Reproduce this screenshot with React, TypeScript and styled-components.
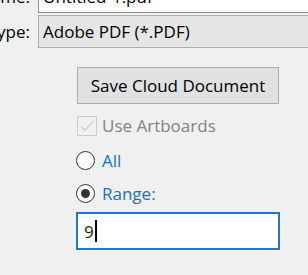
import React from 'react'
import styled, { createGlobalStyle } from 'styled-components'

const GlobalStyle = createGlobalStyle`
  html, body {
    margin: 0;
    padding: 0;
    background: #f0f0f0;
    overflow: hidden;
  }
  body {
    font-family: "Open Sans", "Noto Sans", sans-serif;
    font-size: 17px;
    line-height: 23px;
    color: #000;
  }
`

const Page = styled.div`
  width: 308px;
  height: 275px;
  overflow: hidden;
  background: #f0f0f0;
`

const FieldGrid = styled.div`
  display: grid;
  grid-template-columns: 30px 1fr;
  column-gap: 8px;
  row-gap: 2px;
  margin-top: -20px;
`

const Label = styled.div`
  display: flex;
  justify-content: flex-end;
  align-items: center;
  overflow: hidden;
  white-space: nowrap;
`

const Field = styled.div<{ $readOnly?: boolean }>`
  height: 33px;
  box-sizing: border-box;
  display: flex;
  align-items: center;
  padding-left: 4px;
  margin-right: -10px;
  white-space: nowrap;
  background: ${({ $readOnly }) => ($readOnly ? '#e5e5e5' : '#ffffff')};
  border: 1px solid ${({ $readOnly }) => ($readOnly ? '#adadad' : '#8f8f8f')};
`

const Options = styled.div`
  display: flex;
  flex-direction: column;
  align-items: flex-start;
  margin-left: 76px;
`

const Button = styled.button`
  margin-top: 19px;
  margin-left: 1px;
  width: 202px;
  height: 37px;
  box-sizing: border-box;
  background: #e1e1e1;
  border: 1px solid #adadad;
  font: inherit;
  color: #000;
  padding: 0;
`

const CheckRow = styled.label`
  display: flex;
  align-items: center;
  gap: 5px;
  margin-top: 10px;
  margin-left: 1px;
  color: #838383;
`

const CheckBox = styled.span`
  width: 20px;
  height: 20px;
  box-sizing: border-box;
  border: 1px solid #cccccc;
  background: #f0f0f0;
  display: flex;
  align-items: center;
  justify-content: center;
`

const RadioRow = styled.label<{ $gap: number }>`
  display: flex;
  align-items: center;
  gap: 7px;
  margin-top: ${({ $gap }) => $gap}px;
  color: #1a72c9;
`

const Radio = styled.span<{ $checked?: boolean }>`
  width: 19px;
  height: 19px;
  box-sizing: border-box;
  border-radius: 50%;
  border: 1px solid #333333;
  background: #ffffff;
  display: flex;
  align-items: center;
  justify-content: center;

  &::after {
    content: '';
    width: 9px;
    height: 9px;
    border-radius: 50%;
    background: #333333;
    display: ${({ $checked }) => ($checked ? 'block' : 'none')};
  }
`

const RangeInput = styled.div`
  margin-top: 7px;
  width: 204px;
  height: 38px;
  box-sizing: border-box;
  border: 2px solid #1979ca;
  background: #ffffff;
  display: flex;
  align-items: center;
  padding-left: 6px;
  color: #222;
`

const Caret = styled.span`
  width: 2px;
  height: 22px;
  margin-left: 1px;
  background: #000;
`

export default function App() {
  return (
    <Page>
      <GlobalStyle />
      <FieldGrid>
        <Label>File name:</Label>
        <Field>Untitled-1.pdf</Field>
        <Label>Save as type:</Label>
        <Field $readOnly>Adobe PDF (*.PDF)</Field>
      </FieldGrid>
      <Options>
        <Button>Save Cloud Document</Button>
        <CheckRow>
          <CheckBox>
            <svg width="16" height="16" viewBox="0 0 16 16">
              <path d="M2 8.5 L6 12.5 L14 3.5" fill="none" stroke="#cccccc" strokeWidth="1.2" />
            </svg>
          </CheckBox>
          Use Artboards
        </CheckRow>
        <RadioRow $gap={12}>
          <Radio />
          All
        </RadioRow>
        <RadioRow $gap={10}>
          <Radio $checked />
          Range:
        </RadioRow>
        <RangeInput>
          9<Caret />
        </RangeInput>
      </Options>
    </Page>
  )
}
